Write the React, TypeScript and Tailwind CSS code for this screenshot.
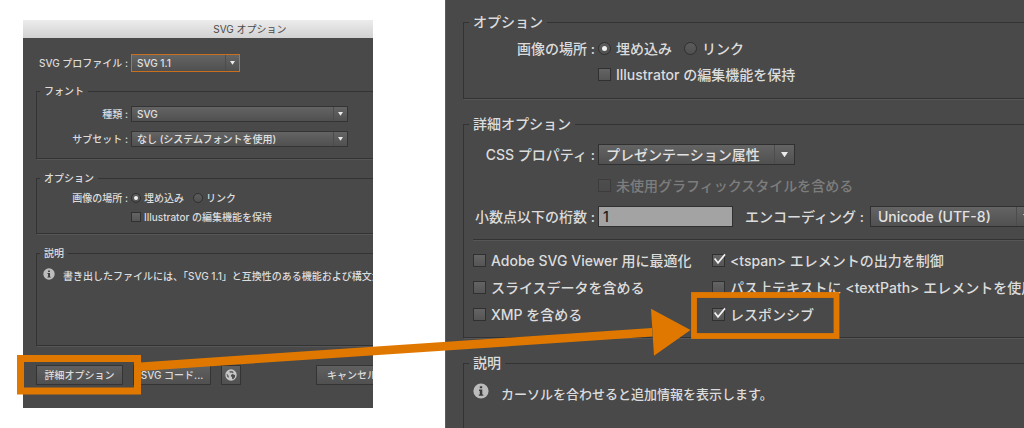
import React from 'react';
import clsx from 'clsx';

type Size = 'sm' | 'lg';

interface SizedProps {
  size: Size;
}

function Group({ size, title, className, children }: SizedProps & { title: string; className?: string; children: React.ReactNode }) {
  return (
    <fieldset
      className={clsx(
        'min-w-0 border border-[#333333] shadow-[1px_1px_0_#565656]',
        size === 'sm' ? 'px-[3px]' : 'px-[5px]',
        className
      )}
    >
      <legend className={clsx('px-1', size === 'sm' ? 'leading-[14px]' : 'leading-5')}>{title}</legend>
      {children}
    </fieldset>
  );
}

function Select({ size, id, value, className }: SizedProps & { id: string; value: string; className: string }) {
  return (
    <span className={clsx('relative flex shrink-0', className)}>
      <select
        id={id}
        defaultValue={value}
        className={clsx(
          'h-full w-full appearance-none border border-inherit bg-linear-to-b from-[#646464] to-[#505050] text-[#e2e2e2] outline-none',
          size === 'sm' ? 'pl-[5px]' : 'pl-[7px]'
        )}
      >
        <option>{value}</option>
      </select>
      <span
        className={clsx(
          'pointer-events-none absolute inset-y-px right-px flex items-center justify-center border-l border-[#4c4c4c]',
          size === 'sm' ? 'w-[14px]' : 'w-5'
        )}
      >
        <svg viewBox="0 0 8 6" className={size === 'sm' ? 'w-[5px]' : 'w-[7px]'} fill="#ececec">
          <path d="M0 0h8L4 6z" />
        </svg>
      </span>
    </span>
  );
}

function Check({ size, label, checked, disabled }: SizedProps & { label: string; checked?: boolean; disabled?: boolean }) {
  return (
    <label
      className={clsx(
        'flex items-center whitespace-nowrap',
        size === 'sm' ? 'h-4 gap-[3px]' : 'h-[21px] gap-[5px]',
        disabled && 'text-[#7d7d7d]'
      )}
    >
      <span className="relative flex shrink-0">
        <input
          type="checkbox"
          defaultChecked={checked}
          disabled={disabled}
          className={clsx(
            'peer appearance-none border border-[#303030] bg-linear-to-b from-[#646464] to-[#555555] disabled:border-[#3c3c3c] disabled:from-[#4d4d4d] disabled:to-[#4a4a4a]',
            size === 'sm' ? 'size-[10px]' : 'size-[13px]'
          )}
        />
        <svg
          viewBox="0 0 16 16"
          className="pointer-events-none absolute -top-px left-0 hidden size-4 peer-checked:block"
          fill="none"
          stroke="#f2f2f2"
          strokeWidth="1.7"
        >
          <path d="M2.6 5.4 6 9.8 13 1.4" />
        </svg>
      </span>
      {label}
    </label>
  );
}

function Radio({ size, name, label, checked }: SizedProps & { name: string; label: string; checked?: boolean }) {
  return (
    <label className={clsx('flex items-center whitespace-nowrap', size === 'sm' ? 'gap-[3px]' : 'gap-[5px]')}>
      <span className="relative flex shrink-0 items-center justify-center">
        <input
          type="radio"
          name={name}
          defaultChecked={checked}
          className={clsx(
            'peer appearance-none rounded-full border border-[#303030] bg-linear-to-b from-[#5c5c5c] to-[#505050]',
            size === 'sm' ? 'size-[10px]' : 'size-[13px]'
          )}
        />
        <span
          className={clsx(
            'pointer-events-none absolute hidden rounded-full bg-[#f0f0f0] peer-checked:block',
            size === 'sm' ? 'size-1' : 'size-[5px]'
          )}
        />
      </span>
      {label}
    </label>
  );
}

function InfoIcon({ className }: { className: string }) {
  return (
    <svg viewBox="0 0 16 16" className={clsx('shrink-0', className)}>
      <circle cx="8" cy="8" r="7.6" fill="#bcbcbc" />
      <path d="M6.8 3.2h2.4v2.1H6.8zM6 6.6h3.3v4.9h1v1.300H5.800v-1.300h1V7.900H6z" fill="#3c3c3c" />
    </svg>
  );
}

function GlobeIcon() {
  return (
    <svg viewBox="0 0 16 16" className="size-3">
      <circle cx="8" cy="8" r="7.6" fill="#c8c8c8" />
      <path d="M5.500 3.200 8 2.200l2.600.8 1 2.200-2 .4-1.200-1-1.700.6z" fill="#6a6a6a" />
      <path d="m8 8 2.200-1.200 3.400 1.400-.4 2.800-2.400 2.600-1.200-.4-.2-2.600L7.800 9.800z" fill="#4c4c4c" />
      <path d="M2 6.200 3.600 7l1.600 2.600-.4 2.400-2-1.800z" fill="#6a6a6a" />
    </svg>
  );
}

const buttonClass =
  'flex h-5 shrink-0 items-center justify-center border border-[#343434] bg-linear-to-b from-[#606060] to-[#505050] whitespace-nowrap';

function ImageLocation({ size, name }: SizedProps & { name: string }) {
  return (
    <div className={clsx('flex items-center gap-[3px]', size === 'sm' ? 'h-4' : 'h-[21px]')} role="radiogroup">
      <span className={clsx('flex shrink-0 justify-end whitespace-nowrap', size === 'sm' ? 'w-[88px]' : 'w-[126px]')}>
        画像の場所 :
      </span>
      <div className={clsx('flex', size === 'sm' ? 'gap-[9px]' : 'gap-3')}>
        <Radio size={size} name={name} label="埋め込み" checked />
        <Radio size={size} name={name} label="リンク" />
      </div>
    </div>
  );
}

function SvgOptionsDialog() {
  return (
    <section className="mt-5 self-start overflow-hidden bg-[#494949] text-[10px]">
      <div className="min-w-[454px]">
        <h1 className="bg-linear-to-b from-[#ececec] to-[#d2d2d2] text-center leading-[18px] font-normal text-[#4a4a4a]">
          SVG オプション
        </h1>
        <div className="flex flex-col gap-3 px-[13px] pt-4 pb-[23px]">
          <div className="flex items-center gap-[3px]">
            <label htmlFor="profile" className="flex w-[92px] shrink-0 justify-end whitespace-nowrap">
              SVG プロファイル :
            </label>
            <Select size="sm" id="profile" value="SVG 1.1" className="h-[18px] w-[109px] border-[#c9701c]" />
          </div>

          <Group size="sm" title="フォント">
            <div className="flex flex-col gap-[9px] pt-2 pb-[11px]">
              <div className="flex items-center gap-[3px]">
                <label htmlFor="font-type" className="flex w-[88px] shrink-0 justify-end">種類 :</label>
                <Select size="sm" id="font-type" value="SVG" className="h-4 w-[217px] border-[#343434]" />
              </div>
              <div className="flex items-center gap-[3px]">
                <label htmlFor="subset" className="flex w-[88px] shrink-0 justify-end">サブセット :</label>
                <Select size="sm" id="subset" value="なし (システムフォントを使用)" className="h-4 w-[217px] border-[#343434]" />
              </div>
            </div>
          </Group>

          <Group size="sm" title="オプション">
            <div className="flex flex-col gap-[3px] pt-[5px] pb-2">
              <ImageLocation size="sm" name="location" />
              <div className="pl-[91px]">
                <Check size="sm" label="Illustrator の編集機能を保持" />
              </div>
            </div>
          </Group>

          <Group size="sm" title="説明">
            <div className="flex h-[85px] items-start gap-2 px-[3px] pt-2">
              <InfoIcon className="size-3" />
              <p className="leading-4 whitespace-nowrap">
                書き出したファイルには、「SVG 1.1」と互換性のある機能および構文が
              </p>
            </div>
          </Group>

          <div className="mt-[7px] flex gap-[10px]">
            <button type="button" className={clsx(buttonClass, 'w-[87px]')}>詳細オプション</button>
            <button type="button" className={clsx(buttonClass, 'w-[78px]')}>SVG コード...</button>
            <button type="button" aria-label="Web" className={clsx(buttonClass, 'w-5')}>
              <GlobeIcon />
            </button>
            <button type="button" className={clsx(buttonClass, 'ml-[65px] w-[72px]')}>キャンセル</button>
          </div>
        </div>
      </div>
    </section>
  );
}

function DetailPanel() {
  return (
    <section className="overflow-hidden border-l border-[#5c5c5c] bg-[#494949] text-sm">
      <div className="flex w-[120%] flex-col gap-[15px] pt-3 pl-[17px]">
        <Group size="lg" title="オプション">
          <div className="flex flex-col gap-[5px] pt-[6px] pb-[13px]">
            <ImageLocation size="lg" name="location-detail" />
            <div className="pl-[129px]">
              <Check size="lg" label="Illustrator の編集機能を保持" />
            </div>
          </div>
        </Group>

        <Group size="lg" title="詳細オプション">
          <div className="flex flex-col gap-[10px] pt-[10px]">
            <div className="flex items-center gap-[3px]">
              <label htmlFor="css" className="flex w-[126px] shrink-0 justify-end whitespace-nowrap">
                CSS プロパティ :
              </label>
              <Select size="lg" id="css" value="プレゼンテーション属性" className="h-[21px] w-[197px] border-[#303030]" />
            </div>
            <div className="pl-[129px]">
              <Check size="lg" label="未使用グラフィックスタイルを含める" disabled />
            </div>
            <div className="flex items-center gap-[3px]">
              <label htmlFor="digits" className="flex w-[126px] shrink-0 justify-end whitespace-nowrap">
                小数点以下の桁数 :
              </label>
              <input
                id="digits"
                type="text"
                defaultValue="1"
                className="h-[21px] w-[135px] shrink-0 border border-[#303030] bg-[#a3a3a3] px-1 text-[#1c1c1c] outline-none"
              />
              <label htmlFor="encoding" className="ml-[9px] flex w-[122px] shrink-0 whitespace-nowrap">
                エンコーディング :
              </label>
              <Select size="lg" id="encoding" value="Unicode (UTF-8)" className="h-[21px] w-[167px] border-[#303030]" />
            </div>
          </div>
          <hr className="mt-3 mb-[10px] ml-1 border-t border-[#333333] shadow-[0_1px_0_#565656]" />
          <div className="grid grid-cols-[239px_1fr] gap-y-[6px] pb-3 pl-1">
            <Check size="lg" label="Adobe SVG Viewer 用に最適化" />
            <Check size="lg" label="<tspan> エレメントの出力を制御" checked />
            <Check size="lg" label="スライスデータを含める" />
            <Check size="lg" label="パス上テキストに <textPath> エレメントを使用" />
            <Check size="lg" label="XMP を含める" />
            <Check size="lg" label="レスポンシブ" checked />
          </div>
        </Group>

        <Group size="lg" title="説明">
          <div className="flex h-24 items-start gap-3 px-1 pt-[10px]">
            <InfoIcon className="size-4" />
            <p className="text-[13px] leading-[22px] whitespace-nowrap">カーソルを合わせると追加情報を表示します。</p>
          </div>
        </Group>
      </div>
    </section>
  );
}

// highlight frames and the arrow that joins them
function Annotation() {
  return (
    <svg viewBox="0 0 1024 428" className="pointer-events-none absolute top-0 left-0 w-full" fill="#e07800" aria-hidden="true">
      <rect x="20.500" y="358.500" width="117" height="32.500" fill="none" stroke="#e07800" strokeWidth="7" />
      <rect x="694" y="295" width="142.500" height="41" fill="none" stroke="#e07800" strokeWidth="5.800" />
      <path d="M140 362.400 652 328l.5 8.600L140 371z" />
      <path d="M651 308.700 690.500 330 654 355.700z" />
    </svg>
  );
}

export default function App() {
  return (
    <main className="relative grid h-screen grid-cols-[350fr_579fr] gap-x-[72px] overflow-hidden bg-white pl-[23px] font-['Inter','Noto_Sans_CJK_JP',sans-serif] font-medium text-[#dcdcdc]">
      <SvgOptionsDialog />
      <DetailPanel />
      <Annotation />
    </main>
  );
}
